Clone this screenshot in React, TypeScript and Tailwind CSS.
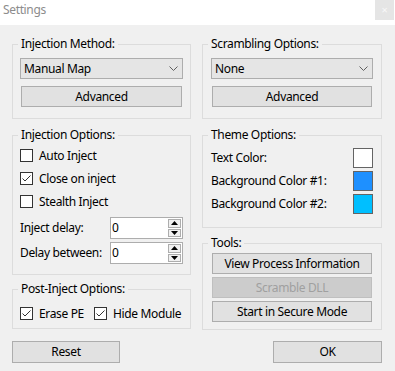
import React from "react";

const font = { fontFamily: '"Noto Sans", "Open Sans", sans-serif', letterSpacing: "-0.35px" };

function Group({ label, className, children }: { label: string; className?: string; children: React.ReactNode }) {
  return (
    <div className={`relative border border-[#dcdcdc] ${className ?? ""}`}>
      <div className="absolute left-[5px] top-[-9px] whitespace-nowrap bg-[#f0f0f0] px-[3px] text-[12px] leading-[16px] text-black">{label}</div>
      {children}
    </div>
  );
}

function Combo({ value }: { value: string }) {
  return (
    <div className="flex h-[21px] items-center justify-between border border-[#adadad] bg-[#e5e5e5] pl-[3px] pr-[4px] text-[12px] text-black">
      <span>{value}</span>
      <svg width="9" height="5" viewBox="0 0 9 5">
        <polyline points="0.5,0.5 4.5,4.5 8.5,0.5" fill="none" stroke="#606060" strokeWidth="1" />
      </svg>
    </div>
  );
}

function Btn({ children, disabled, className }: { children: React.ReactNode; disabled?: boolean; className?: string }) {
  return (
    <div
      className={`flex h-[21px] items-center justify-center whitespace-nowrap border text-[12px] ${
        disabled ? "border-[#bfbfbf] bg-[#cccccc] text-[#a0a0a0]" : "border-[#adadad] bg-[#e1e1e1] text-black"
      } ${className ?? ""}`}
    >
      {children}
    </div>
  );
}

function Check({ checked }: { checked?: boolean }) {
  return (
    <div className="flex h-[13px] w-[13px] shrink-0 items-center justify-center border border-[#333333] bg-white">
      {checked && (
        <svg width="11" height="11" viewBox="0 0 11 11">
          <polyline points="1.5,5.5 4,8 9.5,2.5" fill="none" stroke="#333333" strokeWidth="1" />
        </svg>
      )}
    </div>
  );
}

function CheckRow({ label, checked }: { label: string; checked?: boolean }) {
  return (
    <div className="flex h-[23px] items-center gap-[6px] whitespace-nowrap text-[12px] text-black">
      <Check checked={checked} />
      <span>{label}</span>
    </div>
  );
}

function Spin({ label }: { label: string }) {
  return (
    <div className="flex h-[22px] items-center justify-between whitespace-nowrap text-[12px] text-black">
      <span>{label}</span>
      <div className="flex h-[22px] w-[73px] border border-[#adadad] bg-white">
        <div className="flex flex-1 items-center pl-[1px]">0</div>
        <div className="flex w-[15px] flex-col gap-[1px] p-[1px]">
          <div className="flex flex-1 items-center justify-center border border-[#adadad] bg-[#f0f0f0]">
            <svg width="7" height="4" viewBox="0 0 7 4">
              <polygon points="0,4 3.5,0 7,4" fill="#000" />
            </svg>
          </div>
          <div className="flex flex-1 items-center justify-center border border-[#adadad] bg-[#f0f0f0]">
            <svg width="7" height="4" viewBox="0 0 7 4">
              <polygon points="0,0 3.5,4 7,0" fill="#000" />
            </svg>
          </div>
        </div>
      </div>
    </div>
  );
}

function Swatch({ label, color }: { label: string; color: string }) {
  return (
    <div className="flex h-[23px] items-center justify-between whitespace-nowrap text-[12px] text-black">
      <span>{label}</span>
      <div className="h-[20px] w-[20px] border border-[#646464]" style={{ backgroundColor: color }} />
    </div>
  );
}

export default function App() {
  return (
    <div className="h-[371px] w-[395px] bg-[#f0f0f0]" style={font}>
      <div className="flex h-[25px] items-start justify-between bg-white">
        <span className="pl-[3px] pt-[2px] text-[12px] leading-[16px] text-[#8c8c8c]">Settings</span>
        <div className="mr-[1px] flex h-[20px] w-[19px] items-center justify-center bg-[#e5e5e5] text-[11px] text-[#f8f8f8]">×</div>
      </div>
      <div className="flex gap-[11px] pl-[12px] pt-[19px]">
        {/* left column */}
        <div className="flex w-[179px] flex-col">
          <Group label="Injection Method:" className="h-[75px] px-[7px] pt-[13px]">
            <Combo value="Manual Map" />
            <Btn className="mx-[1px] mt-[7px]">Advanced</Btn>
          </Group>
          <Group label="Injection Options:" className="mt-[16px] h-[140px] px-[7px] pt-[8px]">
            <CheckRow label="Auto Inject" />
            <CheckRow label="Close on inject" checked />
            <CheckRow label="Stealth Inject" />
            <div className="mt-[4px]">
              <Spin label="Inject delay:" />
            </div>
            <div className="mt-[3px]">
              <Spin label="Delay between:" />
            </div>
          </Group>
          <Group label="Post-Inject Options:" className="mt-[14px] h-[40px] px-[7px] pt-[12px]">
            <div className="flex">
              <div className="w-[74px]">
                <CheckRow label="Erase PE" checked />
              </div>
              <CheckRow label="Hide Module" checked />
            </div>
          </Group>
          <Btn className="mt-[12px] h-[22px] w-[108px]">Reset</Btn>
        </div>
        {/* right column */}
        <div className="flex w-[180px] flex-col">
          <Group label="Scrambling Options:" className="h-[75px] px-[8px] pt-[13px]">
            <Combo value="None" />
            <Btn className="mx-[1px] mt-[7px]">Advanced</Btn>
          </Group>
          <Group label="Theme Options:" className="mt-[16px] h-[93px] px-[8px] pt-[10px]">
            <Swatch label="Text Color:" color="#ffffff" />
            <Swatch label="Background Color #1:" color="#1e90ff" />
            <Swatch label="Background Color #2:" color="#00bfff" />
          </Group>
          <Group label="Tools:" className="mt-[15px] h-[87px] px-[9px] pt-[9px]">
            <div className="flex flex-col gap-[3px]">
              <Btn>View Process Information</Btn>
              <Btn disabled>Scramble DLL</Btn>
              <Btn>Start in Secure Mode</Btn>
            </div>
          </Group>
          <div className="mt-[11px] flex justify-end">
            <Btn className="h-[22px] w-[109px]">OK</Btn>
          </div>
        </div>
      </div>
    </div>
  );
}
